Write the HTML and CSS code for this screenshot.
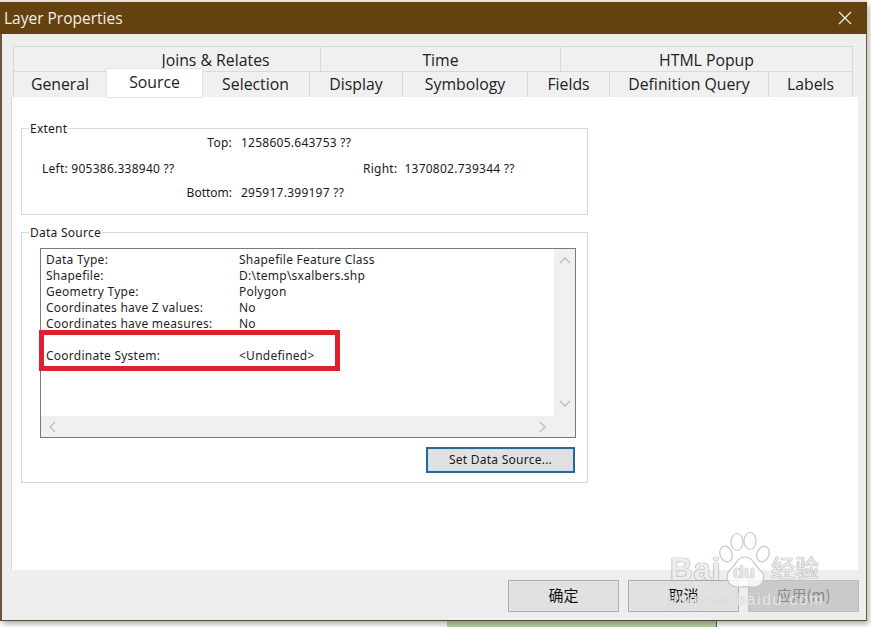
FILE: index.html
```html
<!DOCTYPE html>
<html lang="en">
<head>
<meta charset="utf-8">
<title>Layer Properties</title>
<link rel="stylesheet" href="styles.css">
</head>
<body>
<div class="window">
  <div class="titlebar">
    <span class="title">Layer Properties</span>
    <svg class="close" width="14" height="14" viewBox="0 0 14 14"><path d="M1 1 L13 13 M13 1 L1 13" stroke="#f4efe6" stroke-width="1.2" fill="none"/></svg>
  </div>
  <div class="tabs">
    <div class="tabrow">
      <div class="tab w-joins">Joins &amp; Relates</div>
      <div class="tab w-time">Time</div>
      <div class="tab w-html">HTML Popup</div>
    </div>
    <div class="tabrow">
      <div class="tab w-general">General</div>
      <div class="tab active w-source">Source</div>
      <div class="tab w-selection">Selection</div>
      <div class="tab w-display">Display</div>
      <div class="tab w-symbology">Symbology</div>
      <div class="tab w-fields">Fields</div>
      <div class="tab w-defq">Definition Query</div>
      <div class="tab w-labels">Labels</div>
    </div>
  </div>
  <div class="panel">
    <div class="group extent">
      <div class="legend">Extent</div>
      <div class="ext-row ext-top"><span class="ext-key k-top">Top:</span><span>1258605.643753 ??</span></div>
      <div class="ext-row ext-mid">
        <span class="ext-left">Left: 905386.338940 ??</span>
        <span class="ext-right"><span class="k-right">Right:</span><span>1370802.739344 ??</span></span>
      </div>
      <div class="ext-row ext-bottom"><span class="ext-key k-bottom">Bottom:</span><span>295917.399197 ??</span></div>
    </div>
    <div class="group source">
      <div class="legend">Data Source</div>
      <div class="listbox">
        <div class="listmain">
          <div class="listtext">
            <div class="row"><span class="col1">Data Type:</span><span>Shapefile Feature Class</span></div>
            <div class="row"><span class="col1">Shapefile:</span><span>D:\temp\sxalbers.shp</span></div>
            <div class="row"><span class="col1">Geometry Type:</span><span>Polygon</span></div>
            <div class="row"><span class="col1">Coordinates have Z values:</span><span>No</span></div>
            <div class="row"><span class="col1">Coordinates have measures:</span><span>No</span></div>
            <div class="row"></div>
            <div class="row"><span class="col1">Coordinate System:</span><span>&lt;Undefined&gt;</span></div>
          </div>
          <div class="vscroll">
            <svg width="12" height="8" viewBox="0 0 12 8"><path d="M1 7 L6 2 L11 7" stroke="#c4c4c4" stroke-width="1.6" fill="none"/></svg>
            <svg width="12" height="8" viewBox="0 0 12 8"><path d="M1 1 L6 6 L11 1" stroke="#c4c4c4" stroke-width="1.6" fill="none"/></svg>
          </div>
        </div>
        <div class="hscroll">
          <svg width="8" height="12" viewBox="0 0 8 12"><path d="M7 1 L2 6 L7 11" stroke="#c4c4c4" stroke-width="1.6" fill="none"/></svg>
          <svg width="8" height="12" viewBox="0 0 8 12"><path d="M1 1 L6 6 L1 11" stroke="#c4c4c4" stroke-width="1.6" fill="none"/></svg>
        </div>
        <div class="redbox"></div>
      </div>
      <div class="srcbtn-row"><button class="srcbtn">Set Data Source...</button></div>
    </div>
  </div>
  <div class="footer">
    <button class="btn">确定</button>
    <button class="btn">取消</button>
    <button class="btn disabled">应用(m)</button>
  </div>
  <div class="watermark">
    <svg class="paw" width="170" height="80" viewBox="0 0 170 80">
      <g fill="#fff" fill-opacity=".8" stroke="#c6c6c6" stroke-width="1.2">
        <ellipse cx="60" cy="24" rx="6" ry="8" transform="rotate(-20 60 24)"/>
        <ellipse cx="71" cy="12" rx="6" ry="8.5"/>
        <ellipse cx="84" cy="11" rx="6" ry="8.5"/>
        <ellipse cx="97" cy="24" rx="6" ry="8" transform="rotate(20 97 24)"/>
        <path d="M79 27 C71 27 70 35 65 39 C58 45 61 57 72 57 C76 57 82 56 86 57 C97 58 101 46 94 40 C88 35 87 27 79 27 Z"/>
      </g>
    </svg>
    <span class="wm-bai">Bai</span>
    <span class="wm-du">du</span>
    <span class="wm-jy">经验</span>
    <span class="wm-url">jingyan.baidu.com</span>
  </div>
</div>
<div class="behind"></div>
</body>
</html>
```

FILE: styles.css
```css
* { box-sizing: border-box; }
html, body { margin: 0; padding: 0; }
body {
  width: 871px;
  height: 627px;
  overflow: hidden;
  background: #fff;
  font-family: "Noto Sans", "Liberation Sans", sans-serif;
  color: #1a1a1a;
}
.window {
  position: relative;
  z-index: 1;
  width: 867px;
  height: 619px;
  margin-top: 2px;
  background: #eeeeee;
  border-left: 2px solid #6b573c;
  border-right: 1px solid #6b573c;
  border-bottom: 1px solid #5a4a35;
  box-shadow: 0 -2px 2px #e6dccb, 2px 3px 6px rgba(70, 70, 70, .45);
  display: flex;
  flex-direction: column;
}
.titlebar {
  height: 32px;
  flex: none;
  background: #64420f;
  margin-left: -2px;
  margin-right: -1px;
  display: flex;
  align-items: center;
  justify-content: space-between;
  padding: 0 15px 0 4px;
}
.title {
  color: #f3efe6;
  font: 15.5px/20px "Open Sans", "Noto Sans", sans-serif;
}
.close { margin-top: -1px; }
.tabs {
  flex: none;
  height: 51px;
  margin: 12px 0 0 11px;
  font: 15.8px/20px "Open Sans", "Noto Sans", sans-serif;
  color: #222;
}
.tabrow { display: flex; height: 25px; align-items: flex-end; }
.tabrow + .tabrow { height: 26px; }
.tab {
  height: 100%;
  flex: none;
  background: #f0f0f0;
  border: 1px solid #d9d9d9;
  border-left: 0;
  border-bottom: 0;
  text-align: center;
  padding-top: 3px;
}
.tabrow + .tabrow .tab { padding-top: 2px; }
.tabrow .tab:first-child { border-left: 1px solid #d9d9d9; }
.tabrow .tab.active {
  height: 28px;
  position: relative;
  background: #fff;
  border: 0;
  padding-top: 3px;
  z-index: 2;
  box-shadow: 0 0 0 1px #e4e4e4;
}
.w-joins { width: 308px; padding-left: 97px; }
.w-time { width: 240px; }
.w-html { width: 292px; }
.w-general { width: 94px; }
.w-source { width: 95px; }
.w-selection { width: 108px; }
.w-display { width: 93px; }
.w-symbology { width: 125px; }
.w-fields { width: 82px; }
.w-defq { width: 159px; }
.w-labels { width: 84px; }
.panel {
  flex: none;
  height: 473px;
  width: 847px;
  margin-left: 9px;
  background: #fff;
  border-left: 1px solid #dcdcdc;
  padding: 31px 0 0 9px;
  font-size: 12px;
  line-height: 16px;
  letter-spacing: .25px;
}
.group {
  width: 567px;
  border: 1px solid #d7d7d7;
}
.legend {
  width: fit-content;
  height: 16px;
  margin: -8px 0 0 7px;
  padding: 0 1px;
  background: #fff;
}
.extent { height: 87px; }
.ext-row { display: flex; height: 16px; }
.ext-top { margin-top: -2px; }
.ext-key { width: 219px; text-align: right; padding-right: 9px; flex: none; }
.k-top { padding-right: 9px; }
.k-bottom { letter-spacing: 0; }
.ext-mid { margin-top: 10px; }
.ext-left { width: 341px; padding-left: 20px; flex: none; }
.ext-right { display: flex; gap: 7px; }
.ext-bottom { margin-top: 8px; }
.source { height: 251px; margin-top: 17px; }
.listbox {
  position: relative;
  width: 536px;
  height: 190px;
  margin: 7px 0 0 18px;
  border: 1px solid #7a7a7a;
  display: flex;
  flex-direction: column;
}
.listmain { flex: 1; display: flex; min-height: 0; }
.listtext { flex: 1; padding: 3px 0 0 5px; }
.row { display: flex; height: 16px; color: #1f1f1f; }
.col1 { width: 193px; flex: none; }
.vscroll {
  width: 21px;
  background: #f0f0f0;
  display: flex;
  flex-direction: column;
  justify-content: space-between;
  align-items: center;
  padding: 7px 0 8px;
}
.hscroll {
  height: 21px;
  flex: none;
  background: #f0f0f0;
  display: flex;
  align-items: center;
  justify-content: space-between;
  padding: 0 28px 0 7px;
}
.redbox {
  position: absolute;
  left: -2px;
  top: 81px;
  width: 301px;
  height: 41px;
  border: 5px solid #dc202e;
}
.srcbtn-row {
  display: flex;
  justify-content: flex-end;
  width: 553px;
  margin-top: 9px;
}
.srcbtn {
  width: 149px;
  height: 26px;
  background: #e1e1e1;
  border: 2px solid #2b6a8e;
  box-shadow: inset 0 0 0 1px #c5e2f5;
  font: 12px/16px "Noto Sans", sans-serif;
  letter-spacing: .25px;
  color: #1a1a1a;
  padding: 0;
}
.footer {
  flex: 1;
  display: flex;
  justify-content: flex-end;
  gap: 9px;
  padding: 10px 7px 0 0;
}
.btn {
  width: 111px;
  height: 32px;
  background: #e1e1e1;
  border: 1px solid #adadad;
  font: 15px/18px "Noto Sans CJK SC", "Noto Sans", sans-serif;
  color: #111;
  padding: 0 0 2px;
}
.btn.disabled { background: #cacaca; border-color: #c0c0c0; color: #8a8a8a; }
.watermark {
  position: absolute;
  left: 664px;
  top: 528px;
  width: 170px;
  height: 80px;
  pointer-events: none;
}
.paw { position: absolute; left: 0; top: 0; }
.watermark span { position: absolute; white-space: nowrap; }
.wm-bai, .wm-jy {
  font-family: "Liberation Sans", "Noto Sans CJK SC", sans-serif;
  color: rgba(255, 255, 255, .85);
  text-shadow: 0 0 1px #8f8f8f, 0 0 1px #8f8f8f;
}
.wm-bai { left: 4px; top: 22px; font-size: 31px; line-height: 36px; font-weight: 700; letter-spacing: 1px; }
.wm-du {
  left: 67px;
  top: 32px;
  font: 700 18px/20px "Liberation Sans", sans-serif;
  color: #e8e8e8;
  text-shadow: 0 0 1px #8f8f8f;
}
.wm-jy { left: 105px; top: 23px; font-size: 24px; line-height: 32px; }
.wm-url {
  left: 2px;
  top: 60px;
  font: 16px/20px "Liberation Sans", sans-serif;
  letter-spacing: 1.6px;
  color: rgba(255, 255, 255, .7);
  text-shadow: 0 0 1px #b0b0b0;
}
.behind {
  width: 270px;
  height: 6px;
  margin-left: 447px;
  background: #b8d4a0;
  border-right: 1px solid #555;
}
```
